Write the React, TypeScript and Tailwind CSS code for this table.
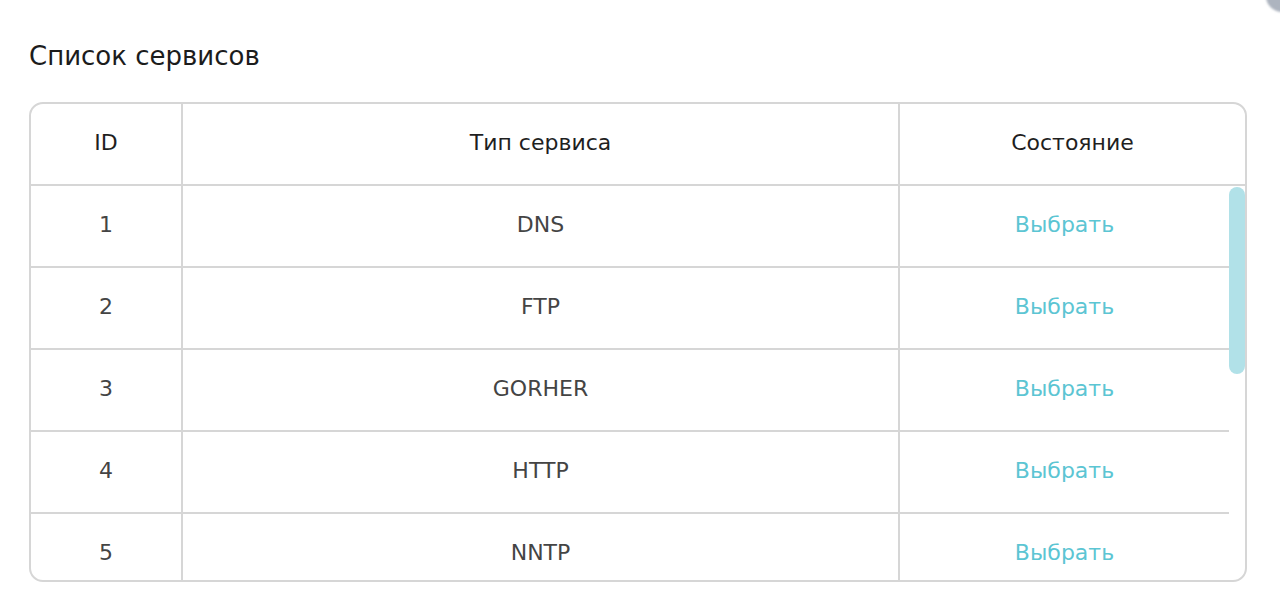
const services = [
  { id: 1, type: "DNS" },
  { id: 2, type: "FTP" },
  { id: 3, type: "GORHER" },
  { id: 4, type: "HTTP" },
  { id: 5, type: "NNTP" },
];

const ServiceRow = ({ id, type }: { id: number; type: string }) => {
  return (
    <div className="flex h-[82px] shrink-0 border-b-2 border-[#d6d6d6] text-[22px] text-[#444]">
      <div className="flex w-[152px] items-center justify-center border-r-2 border-[#d6d6d6] pb-[3px]">
        {id}
      </div>
      <div className="flex w-[717px] items-center justify-center border-r-2 border-[#d6d6d6] pb-[3px]">
        {type}
      </div>
      <div className="flex flex-1 items-center justify-center pb-[3px]">
        <button className="cursor-pointer text-[#5cc5d3] hover:underline">Выбрать</button>
      </div>
    </div>
  );
};

export default function App() {
  return (
    <div className="relative h-[607px] overflow-hidden bg-white pl-[29px] pr-[33px] pt-[38px] font-['DejaVu_Sans',sans-serif]">
      <div className="absolute -right-[18px] -top-[20px] h-[32px] w-[32px] rounded-full bg-gray-400/80 blur-[1px]" />
      <h2 className="text-[26px] leading-[36px] text-[#1c1c1c]">Список сервисов</h2>
      <div className="mt-[28px] overflow-hidden rounded-[14px] border-2 border-[#d6d6d6]">
        <div className="flex h-[82px] border-b-2 border-[#d6d6d6] text-[22px] text-[#1f1f1f]">
          <div className="flex w-[152px] items-center justify-center border-r-2 border-[#d6d6d6] pb-[3px]">
            ID
          </div>
          <div className="flex w-[717px] items-center justify-center border-r-2 border-[#d6d6d6] pb-[3px]">
            Тип сервиса
          </div>
          <div className="flex flex-1 items-center justify-center pb-[3px]">Состояние</div>
        </div>
        <div className="flex h-[394px]">
          <div className="flex flex-1 flex-col overflow-hidden">
            {services.map((s) => (
              <ServiceRow key={s.id} id={s.id} type={s.type} />
            ))}
          </div>
          <div className="w-[16px] pt-[1px]">
            <div className="h-[187px] rounded-full bg-[#b1e1e8]" />
          </div>
        </div>
      </div>
    </div>
  );
}
